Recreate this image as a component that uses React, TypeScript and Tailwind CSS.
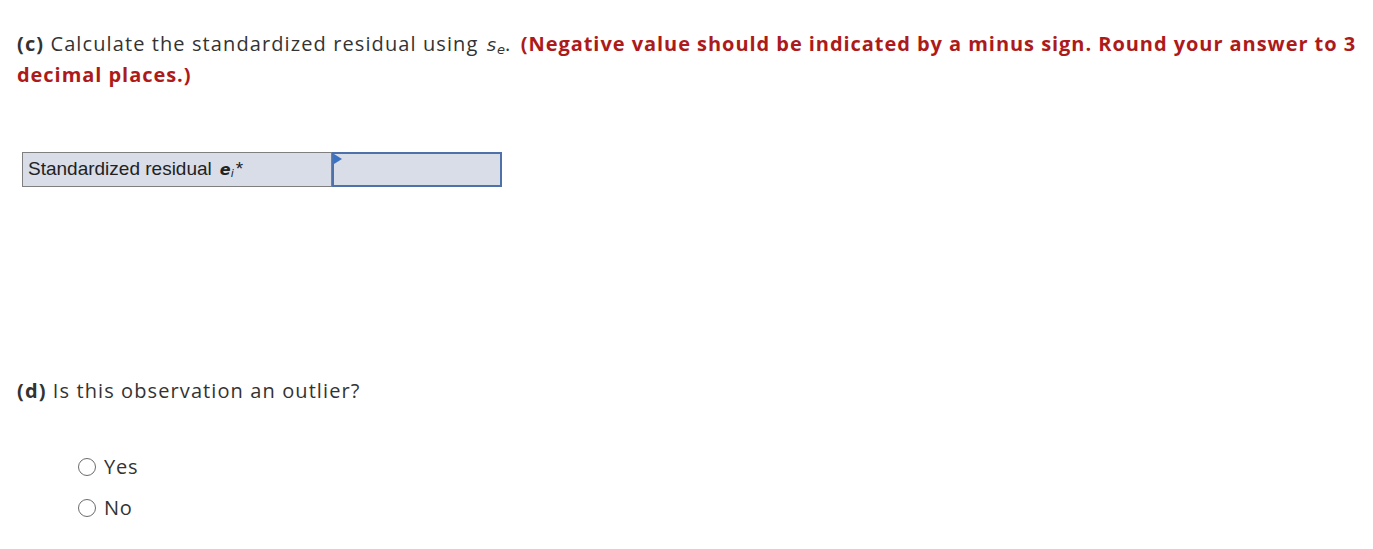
export default function App() {
  return (
    <div className="bg-white w-[1373px] h-[549px] text-[#333333] font-['Open_Sans',sans-serif]">
      <div className="pl-[17px] pt-[29px] pr-[8px]">
        <p className="text-[20px] leading-[30px] tracking-[1.1px]">
          <span className="font-bold">(c)</span> Calculate the standardized residual using{" "}
          <span className="ml-[2px] italic font-['DejaVu_Sans',sans-serif] text-[18px] tracking-normal">
            s<sub className="text-[13px] leading-none ml-[1px]">e</sub>
          </span>
          .{" "}
          <span className="ml-[3px] font-bold text-[#ad1a1a] tracking-[0.95px]">
            (Negative value should be indicated by a minus sign. Round your answer to 3 decimal places.)
          </span>
        </p>

        <div className="mt-[62px] ml-[5px] flex w-[480px] h-[35px] font-['Liberation_Sans',sans-serif]">
          <div className="w-[310px] bg-[#d9dde8] border border-[#7f7f7f] flex items-center pl-[5px] text-[19px] text-[#222]">
            Standardized residual
            <span className="ml-[8px] italic font-bold font-['DejaVu_Sans',sans-serif] text-[16px]">
              e<sub className="text-[11px] font-normal leading-none">i</sub>
            </span>
            <span className="ml-[2px]">*</span>
          </div>
          <div className="relative flex-1 bg-[#d9dde8] border-2 border-[#4d71a8]">
            <svg className="absolute left-0 top-0" width="8" height="10" viewBox="0 0 8 10">
              <path d="M0 0 L8 5 L0 10 Z" fill="#3b73c4" />
            </svg>
            <input className="w-full h-full bg-transparent outline-none" />
          </div>
        </div>

        <p className="mt-[189px] text-[20px] leading-[30px] tracking-[1.1px]">
          <span className="font-bold">(d)</span> Is this observation an outlier?
        </p>

        <div className="mt-[47px] ml-[61px] flex flex-col gap-[13px]">
          {["Yes", "No"].map((opt) => (
            <label key={opt} className="flex items-center gap-[8px] text-[20px] leading-[28px] tracking-[0.8px]">
              <span className="w-[18px] h-[18px] rounded-full border border-[#6b6b6b] bg-white" />
              {opt}
            </label>
          ))}
        </div>
      </div>
    </div>
  );
}
